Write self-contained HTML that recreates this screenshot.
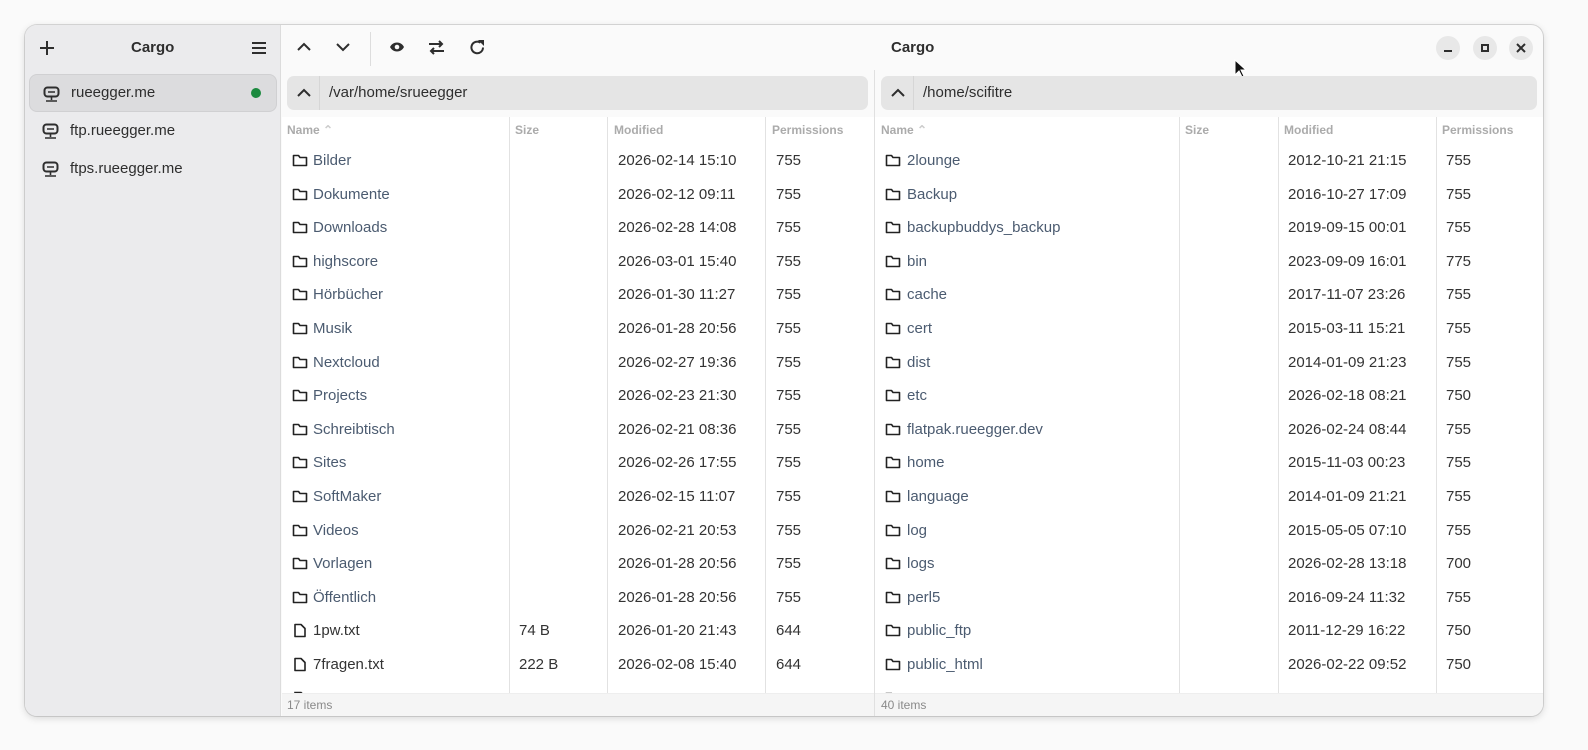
<!DOCTYPE html><html><head><meta charset="utf-8"><style>
*{box-sizing:border-box;margin:0;padding:0}
body{width:1588px;height:750px;background:#fafafa;font-family:"Liberation Sans",sans-serif;position:relative;overflow:hidden}
.win{position:absolute;left:25px;top:25px;width:1518px;height:691px;border-radius:12px;background:#fafafa;box-shadow:0 0 0 1px rgba(0,0,0,.12),0 2px 8px rgba(0,0,0,.15);overflow:hidden}
.side{position:absolute;left:0;top:0;width:256px;height:691px;background:#ebebed;border-right:1px solid #dcdcdc}
.t{position:absolute;font-weight:bold;font-size:15px;color:#2e2e2e}
.srv{position:absolute;left:4px;width:248px;height:38px;border-radius:8px;font-size:15px;color:#2e2e2e;padding-left:41px;line-height:38px}
.srv svg{position:absolute;left:13px;top:11px}
.main{position:absolute;left:257px;top:0;right:0;bottom:0}
.ic{position:absolute}
.path{position:absolute;top:51px;height:34px;background:#e5e5e5;border-radius:7px;font-size:15px;color:#2e2e2e;line-height:34px}
.path .up{position:absolute;left:0;top:0;width:33px;height:34px;border-right:1px solid #d6d6d6}
.path span{position:absolute;left:42px}
.pane{position:absolute;top:92px;height:576px;overflow:hidden;background:#fff}
.hd{position:absolute;top:6px;font-size:12px;font-weight:bold;color:#ababab}
.vl{position:absolute;top:0;bottom:0;width:1px;background:#e2e2e2}
.r{position:absolute;left:0;right:0;height:33.6px;font-size:15px;color:#333}
.r div{position:absolute;top:8px;white-space:nowrap}
.n{color:#4b5b70}
.r svg{position:absolute;top:9px}
.foot{position:absolute;top:668px;height:23px;background:#f5f5f5;font-size:12px;color:#8a8a8a;line-height:23px;border-top:1px solid #eee}
.wb{position:absolute;top:11px;width:24px;height:24px;border-radius:12px;background:#e8e8e8}
</style></head><body>
<div class="win">
<div class="side">
<svg class="ic" style="left:14px;top:15px" width="16" height="16"><path d="M8 1v14M1 8h14" stroke="#2e2e2e" stroke-width="2"/></svg>
<div class="t" style="left:106px;top:14px">Cargo</div>
<svg class="ic" style="left:226px;top:16px" width="16" height="14"><path d="M1 2h14M1 7h14M1 12h14" stroke="#2e2e2e" stroke-width="2"/></svg>
<div class="srv" style="top:49px;background:#dcdcde;border:1px solid #d0d0d2;line-height:36px"><svg width="17" height="17"><rect x="1.5" y="1.5" width="14" height="9" rx="3" fill="none" stroke="#2e2e2e" stroke-width="2"/><path d="M5 6h7M8.5 11v3M3 15h11" stroke="#2e2e2e" stroke-width="1.6"/></svg>rueegger.me<span style="position:absolute;left:221px;top:13px;width:10px;height:10px;border-radius:5px;background:#1c8a3f"></span></div>
<div class="srv" style="top:87px"><svg width="17" height="17"><rect x="1.5" y="1.5" width="14" height="9" rx="3" fill="none" stroke="#2e2e2e" stroke-width="2"/><path d="M5 6h7M8.5 11v3M3 15h11" stroke="#2e2e2e" stroke-width="1.6"/></svg>ftp.rueegger.me</div>
<div class="srv" style="top:125px"><svg width="17" height="17"><rect x="1.5" y="1.5" width="14" height="9" rx="3" fill="none" stroke="#2e2e2e" stroke-width="2"/><path d="M5 6h7M8.5 11v3M3 15h11" stroke="#2e2e2e" stroke-width="1.6"/></svg>ftps.rueegger.me</div>
</div>
<div class="main">
<svg class="ic" style="left:15px;top:17px" width="14" height="10"><path d="M1 8l6-6 6 6" fill="none" stroke="#2e2e2e" stroke-width="2"/></svg>
<svg class="ic" style="left:54px;top:17px" width="14" height="10"><path d="M1 2l6 6 6-6" fill="none" stroke="#2e2e2e" stroke-width="2"/></svg>
<div style="position:absolute;left:88px;top:7px;width:1px;height:34px;background:#ddd"></div>
<svg class="ic" style="left:107px;top:16px" width="16" height="12"><path d="M1 6C4 0 12 0 15 6C12 12 4 12 1 6Z" fill="#2e2e2e"/><circle cx="8" cy="6" r="2.3" fill="#fafafa"/></svg>
<svg class="ic" style="left:146px;top:15px" width="17" height="15"><path d="M1 4h13M11 1l3 3-3 3M16 11H3M6 8l-3 3 3 3" fill="none" stroke="#2e2e2e" stroke-width="2"/></svg>
<svg class="ic" style="left:187px;top:14px" width="17" height="17"><path d="M14 8.5A5.8 5.8 0 1 1 11.5 3.7" fill="none" stroke="#2e2e2e" stroke-width="2"/><path d="M9 1h6v6z" fill="#2e2e2e"/></svg>
<div class="t" style="left:609px;top:14px">Cargo</div>
<div class="wb" style="left:1154px"><div style="position:absolute;left:8px;top:14px;width:8px;height:2px;background:#2e2e2e"></div></div>
<div class="wb" style="left:1191px"><div style="position:absolute;left:8px;top:8px;width:8px;height:8px;border:2px solid #2e2e2e"></div></div>
<div class="wb" style="left:1227px"><svg style="position:absolute;left:7px;top:7px" width="10" height="10"><path d="M1 1l8 8M9 1L1 9" stroke="#2e2e2e" stroke-width="2"/></svg></div>
<svg class="ic" style="left:952px;top:34px" width="14" height="20"><path d="M1 1v15l4-4 3 6 2-1-3-6h5z" fill="#111" stroke="#fff" stroke-width="1"/></svg>

<div class="path" style="left:5px;width:581px"><div class="up"><svg style="position:absolute;left:10px;top:12px" width="14" height="10"><path d="M1 8l6-6 6 6" fill="none" stroke="#2e2e2e" stroke-width="2"/></svg></div><span>/var/home/srueegger</span></div>
<div class="path" style="left:599px;width:656px"><div class="up"><svg style="position:absolute;left:10px;top:12px" width="14" height="10"><path d="M1 8l6-6 6 6" fill="none" stroke="#2e2e2e" stroke-width="2"/></svg></div><span>/home/scifitre</span></div>
<div style="position:absolute;left:592px;top:45px;width:1px;bottom:0;background:#e0e0e0"></div>

<div class="pane" style="left:0;width:592px">
<div class="hd" style="left:5px">Name <span style="color:#ccc">&#8963;</span></div><div class="hd" style="left:233px">Size</div><div class="hd" style="left:332px">Modified</div><div class="hd" style="left:490px">Permissions</div>
<div class="vl" style="left:227px"></div><div class="vl" style="left:325px"></div><div class="vl" style="left:483px"></div>
<div style="position:absolute;left:0;right:0;top:27px">
<div class="r" style="top:0"><svg style="left:10px" width="16" height="14"><path d="M1.5 2.5h5l1.5 2h6.5v8h-13z" fill="none" stroke="#222" stroke-width="1.6" stroke-linejoin="round"/></svg><div class="n" style="left:31px">Bilder</div><div style="left:336px">2026-02-14 15:10</div><div style="left:494px">755</div></div>
<div class="r" style="top:33.6px"><svg style="left:10px" width="16" height="14"><path d="M1.5 2.5h5l1.5 2h6.5v8h-13z" fill="none" stroke="#222" stroke-width="1.6" stroke-linejoin="round"/></svg><div class="n" style="left:31px">Dokumente</div><div style="left:336px">2026-02-12 09:11</div><div style="left:494px">755</div></div>
<div class="r" style="top:67.2px"><svg style="left:10px" width="16" height="14"><path d="M1.5 2.5h5l1.5 2h6.5v8h-13z" fill="none" stroke="#222" stroke-width="1.6" stroke-linejoin="round"/></svg><div class="n" style="left:31px">Downloads</div><div style="left:336px">2026-02-28 14:08</div><div style="left:494px">755</div></div>
<div class="r" style="top:100.8px"><svg style="left:10px" width="16" height="14"><path d="M1.5 2.5h5l1.5 2h6.5v8h-13z" fill="none" stroke="#222" stroke-width="1.6" stroke-linejoin="round"/></svg><div class="n" style="left:31px">highscore</div><div style="left:336px">2026-03-01 15:40</div><div style="left:494px">755</div></div>
<div class="r" style="top:134.4px"><svg style="left:10px" width="16" height="14"><path d="M1.5 2.5h5l1.5 2h6.5v8h-13z" fill="none" stroke="#222" stroke-width="1.6" stroke-linejoin="round"/></svg><div class="n" style="left:31px">Hörbücher</div><div style="left:336px">2026-01-30 11:27</div><div style="left:494px">755</div></div>
<div class="r" style="top:168px"><svg style="left:10px" width="16" height="14"><path d="M1.5 2.5h5l1.5 2h6.5v8h-13z" fill="none" stroke="#222" stroke-width="1.6" stroke-linejoin="round"/></svg><div class="n" style="left:31px">Musik</div><div style="left:336px">2026-01-28 20:56</div><div style="left:494px">755</div></div>
<div class="r" style="top:201.6px"><svg style="left:10px" width="16" height="14"><path d="M1.5 2.5h5l1.5 2h6.5v8h-13z" fill="none" stroke="#222" stroke-width="1.6" stroke-linejoin="round"/></svg><div class="n" style="left:31px">Nextcloud</div><div style="left:336px">2026-02-27 19:36</div><div style="left:494px">755</div></div>
<div class="r" style="top:235.2px"><svg style="left:10px" width="16" height="14"><path d="M1.5 2.5h5l1.5 2h6.5v8h-13z" fill="none" stroke="#222" stroke-width="1.6" stroke-linejoin="round"/></svg><div class="n" style="left:31px">Projects</div><div style="left:336px">2026-02-23 21:30</div><div style="left:494px">755</div></div>
<div class="r" style="top:268.8px"><svg style="left:10px" width="16" height="14"><path d="M1.5 2.5h5l1.5 2h6.5v8h-13z" fill="none" stroke="#222" stroke-width="1.6" stroke-linejoin="round"/></svg><div class="n" style="left:31px">Schreibtisch</div><div style="left:336px">2026-02-21 08:36</div><div style="left:494px">755</div></div>
<div class="r" style="top:302.4px"><svg style="left:10px" width="16" height="14"><path d="M1.5 2.5h5l1.5 2h6.5v8h-13z" fill="none" stroke="#222" stroke-width="1.6" stroke-linejoin="round"/></svg><div class="n" style="left:31px">Sites</div><div style="left:336px">2026-02-26 17:55</div><div style="left:494px">755</div></div>
<div class="r" style="top:336px"><svg style="left:10px" width="16" height="14"><path d="M1.5 2.5h5l1.5 2h6.5v8h-13z" fill="none" stroke="#222" stroke-width="1.6" stroke-linejoin="round"/></svg><div class="n" style="left:31px">SoftMaker</div><div style="left:336px">2026-02-15 11:07</div><div style="left:494px">755</div></div>
<div class="r" style="top:369.6px"><svg style="left:10px" width="16" height="14"><path d="M1.5 2.5h5l1.5 2h6.5v8h-13z" fill="none" stroke="#222" stroke-width="1.6" stroke-linejoin="round"/></svg><div class="n" style="left:31px">Videos</div><div style="left:336px">2026-02-21 20:53</div><div style="left:494px">755</div></div>
<div class="r" style="top:403.2px"><svg style="left:10px" width="16" height="14"><path d="M1.5 2.5h5l1.5 2h6.5v8h-13z" fill="none" stroke="#222" stroke-width="1.6" stroke-linejoin="round"/></svg><div class="n" style="left:31px">Vorlagen</div><div style="left:336px">2026-01-28 20:56</div><div style="left:494px">755</div></div>
<div class="r" style="top:436.8px"><svg style="left:10px" width="16" height="14"><path d="M1.5 2.5h5l1.5 2h6.5v8h-13z" fill="none" stroke="#222" stroke-width="1.6" stroke-linejoin="round"/></svg><div class="n" style="left:31px">Öffentlich</div><div style="left:336px">2026-01-28 20:56</div><div style="left:494px">755</div></div>
<div class="r" style="top:470.4px"><svg style="left:11px" width="14" height="15"><path d="M2 1.5h6l4 4v8H2z" fill="none" stroke="#222" stroke-width="1.6" stroke-linejoin="round"/></svg><div style="left:31px">1pw.txt</div><div style="left:237px">74 B</div><div style="left:336px">2026-01-20 21:43</div><div style="left:494px">644</div></div>
<div class="r" style="top:504px"><svg style="left:11px" width="14" height="15"><path d="M2 1.5h6l4 4v8H2z" fill="none" stroke="#222" stroke-width="1.6" stroke-linejoin="round"/></svg><div style="left:31px">7fragen.txt</div><div style="left:237px">222 B</div><div style="left:336px">2026-02-08 15:40</div><div style="left:494px">644</div></div>
<div class="r" style="top:537.6px"><svg style="left:11px" width="14" height="15"><path d="M2 1.5h6l4 4v8H2z" fill="none" stroke="#222" stroke-width="1.6"/></svg></div>
</div></div>

<div class="pane" style="left:593px;width:668px">
<div class="hd" style="left:6px">Name <span style="color:#ccc">&#8963;</span></div><div class="hd" style="left:310px">Size</div><div class="hd" style="left:409px">Modified</div><div class="hd" style="left:567px">Permissions</div>
<div class="vl" style="left:304px"></div><div class="vl" style="left:403px"></div><div class="vl" style="left:561px"></div>
<div style="position:absolute;left:0;right:0;top:27px">
<div class="r" style="top:0"><svg style="left:10px" width="16" height="14"><path d="M1.5 2.5h5l1.5 2h6.5v8h-13z" fill="none" stroke="#222" stroke-width="1.6" stroke-linejoin="round"/></svg><div class="n" style="left:32px">2lounge</div><div style="left:413px">2012-10-21 21:15</div><div style="left:571px">755</div></div>
<div class="r" style="top:33.6px"><svg style="left:10px" width="16" height="14"><path d="M1.5 2.5h5l1.5 2h6.5v8h-13z" fill="none" stroke="#222" stroke-width="1.6" stroke-linejoin="round"/></svg><div class="n" style="left:32px">Backup</div><div style="left:413px">2016-10-27 17:09</div><div style="left:571px">755</div></div>
<div class="r" style="top:67.2px"><svg style="left:10px" width="16" height="14"><path d="M1.5 2.5h5l1.5 2h6.5v8h-13z" fill="none" stroke="#222" stroke-width="1.6" stroke-linejoin="round"/></svg><div class="n" style="left:32px">backupbuddys_backup</div><div style="left:413px">2019-09-15 00:01</div><div style="left:571px">755</div></div>
<div class="r" style="top:100.8px"><svg style="left:10px" width="16" height="14"><path d="M1.5 2.5h5l1.5 2h6.5v8h-13z" fill="none" stroke="#222" stroke-width="1.6" stroke-linejoin="round"/></svg><div class="n" style="left:32px">bin</div><div style="left:413px">2023-09-09 16:01</div><div style="left:571px">775</div></div>
<div class="r" style="top:134.4px"><svg style="left:10px" width="16" height="14"><path d="M1.5 2.5h5l1.5 2h6.5v8h-13z" fill="none" stroke="#222" stroke-width="1.6" stroke-linejoin="round"/></svg><div class="n" style="left:32px">cache</div><div style="left:413px">2017-11-07 23:26</div><div style="left:571px">755</div></div>
<div class="r" style="top:168px"><svg style="left:10px" width="16" height="14"><path d="M1.5 2.5h5l1.5 2h6.5v8h-13z" fill="none" stroke="#222" stroke-width="1.6" stroke-linejoin="round"/></svg><div class="n" style="left:32px">cert</div><div style="left:413px">2015-03-11 15:21</div><div style="left:571px">755</div></div>
<div class="r" style="top:201.6px"><svg style="left:10px" width="16" height="14"><path d="M1.5 2.5h5l1.5 2h6.5v8h-13z" fill="none" stroke="#222" stroke-width="1.6" stroke-linejoin="round"/></svg><div class="n" style="left:32px">dist</div><div style="left:413px">2014-01-09 21:23</div><div style="left:571px">755</div></div>
<div class="r" style="top:235.2px"><svg style="left:10px" width="16" height="14"><path d="M1.5 2.5h5l1.5 2h6.5v8h-13z" fill="none" stroke="#222" stroke-width="1.6" stroke-linejoin="round"/></svg><div class="n" style="left:32px">etc</div><div style="left:413px">2026-02-18 08:21</div><div style="left:571px">750</div></div>
<div class="r" style="top:268.8px"><svg style="left:10px" width="16" height="14"><path d="M1.5 2.5h5l1.5 2h6.5v8h-13z" fill="none" stroke="#222" stroke-width="1.6" stroke-linejoin="round"/></svg><div class="n" style="left:32px">flatpak.rueegger.dev</div><div style="left:413px">2026-02-24 08:44</div><div style="left:571px">755</div></div>
<div class="r" style="top:302.4px"><svg style="left:10px" width="16" height="14"><path d="M1.5 2.5h5l1.5 2h6.5v8h-13z" fill="none" stroke="#222" stroke-width="1.6" stroke-linejoin="round"/></svg><div class="n" style="left:32px">home</div><div style="left:413px">2015-11-03 00:23</div><div style="left:571px">755</div></div>
<div class="r" style="top:336px"><svg style="left:10px" width="16" height="14"><path d="M1.5 2.5h5l1.5 2h6.5v8h-13z" fill="none" stroke="#222" stroke-width="1.6" stroke-linejoin="round"/></svg><div class="n" style="left:32px">language</div><div style="left:413px">2014-01-09 21:21</div><div style="left:571px">755</div></div>
<div class="r" style="top:369.6px"><svg style="left:10px" width="16" height="14"><path d="M1.5 2.5h5l1.5 2h6.5v8h-13z" fill="none" stroke="#222" stroke-width="1.6" stroke-linejoin="round"/></svg><div class="n" style="left:32px">log</div><div style="left:413px">2015-05-05 07:10</div><div style="left:571px">755</div></div>
<div class="r" style="top:403.2px"><svg style="left:10px" width="16" height="14"><path d="M1.5 2.5h5l1.5 2h6.5v8h-13z" fill="none" stroke="#222" stroke-width="1.6" stroke-linejoin="round"/></svg><div class="n" style="left:32px">logs</div><div style="left:413px">2026-02-28 13:18</div><div style="left:571px">700</div></div>
<div class="r" style="top:436.8px"><svg style="left:10px" width="16" height="14"><path d="M1.5 2.5h5l1.5 2h6.5v8h-13z" fill="none" stroke="#222" stroke-width="1.6" stroke-linejoin="round"/></svg><div class="n" style="left:32px">perl5</div><div style="left:413px">2016-09-24 11:32</div><div style="left:571px">755</div></div>
<div class="r" style="top:470.4px"><svg style="left:10px" width="16" height="14"><path d="M1.5 2.5h5l1.5 2h6.5v8h-13z" fill="none" stroke="#222" stroke-width="1.6" stroke-linejoin="round"/></svg><div class="n" style="left:32px">public_ftp</div><div style="left:413px">2011-12-29 16:22</div><div style="left:571px">750</div></div>
<div class="r" style="top:504px"><svg style="left:10px" width="16" height="14"><path d="M1.5 2.5h5l1.5 2h6.5v8h-13z" fill="none" stroke="#222" stroke-width="1.6" stroke-linejoin="round"/></svg><div class="n" style="left:32px">public_html</div><div style="left:413px">2026-02-22 09:52</div><div style="left:571px">750</div></div>
<div class="r" style="top:537.6px"><svg style="left:10px" width="16" height="14"><path d="M1.5 2.5h5l1.5 2h6.5v8h-13z" fill="none" stroke="#222" stroke-width="1.6"/></svg></div>
</div></div>

<div class="foot" style="left:0;width:592px;padding-left:5px">17 items</div>
<div class="foot" style="left:593px;width:668px;padding-left:6px">40 items</div>
</div>
</div>
</body></html>
